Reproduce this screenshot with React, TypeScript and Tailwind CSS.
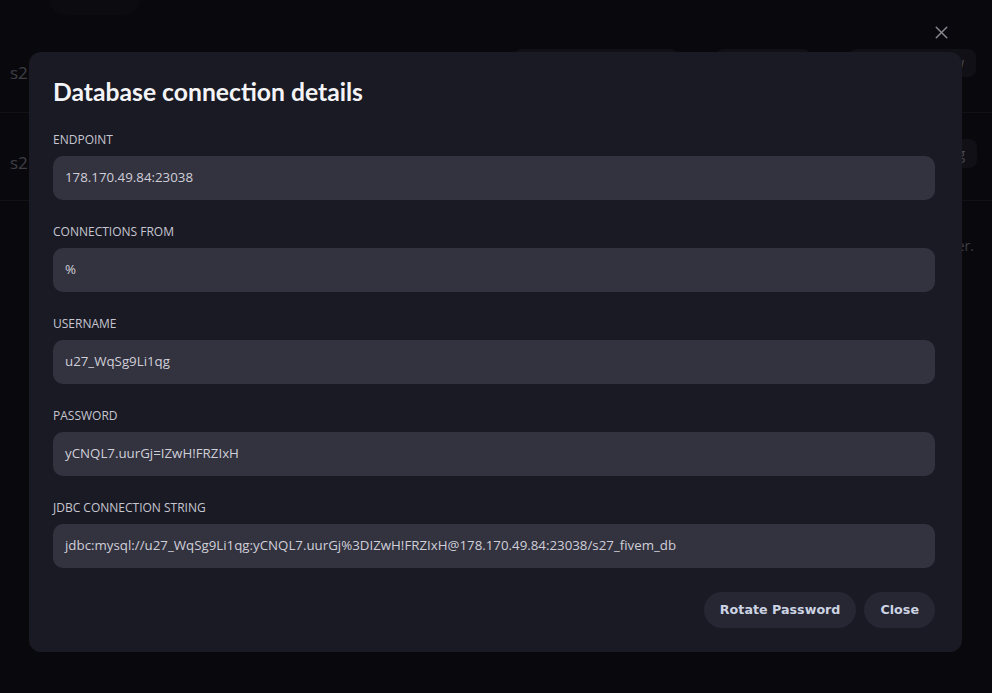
import { X } from "lucide-react";

const FIELDS = [
  { label: "Endpoint", value: "178.170.49.84:23038" },
  { label: "Connections from", value: "%" },
  { label: "Username", value: "u27_WqSg9Li1qg" },
  { label: "Password", value: "yCNQL7.uurGj=IZwH!FRZIxH" },
  {
    label: "JDBC connection string",
    value: "jdbc:mysql://u27_WqSg9Li1qg:yCNQL7.uurGj%3DIZwH!FRZIxH@178.170.49.84:23038/s27_fivem_db",
  },
];

function Field({ label, value }: { label: string; value: string }) {
  return (
    <div className="flex flex-col gap-2">
      <label className="text-[12px] leading-4 uppercase text-[#c6c6d0]">{label}</label>
      <div className="h-11 rounded-[10px] bg-[#33323f] px-3 flex items-center text-[13.3px] text-[#cfcfd8] whitespace-nowrap overflow-hidden">
        {value}
      </div>
    </div>
  );
}

export default function App() {
  return (
    <div
      className="relative w-[992px] h-[693px] overflow-hidden bg-[#09090d]"
      style={{ fontFamily: '"Open Sans", "Noto Sans", sans-serif' }}
    >
      {/* dimmed page behind the dialog */}
      <div className="flex flex-col">
        <div className="h-[15px] flex pl-[50px]">
          <div className="w-[90px] h-[15px] rounded-b-full bg-[#0b0b10]" />
        </div>
        <div className="h-[98px] border-b border-[#111117] flex items-center justify-between pl-[10px]">
          <span className="w-[19px] mt-[18px] overflow-hidden text-[17px] text-[#3e3e44]">s2</span>
          <div className="flex gap-[38px] pr-[16px] -mt-[2px]">
            <div className="w-[164px] h-[28px] rounded-lg bg-[#101016]" />
            <div className="w-[95px] h-[28px] rounded-lg bg-[#101016]" />
            <div className="w-[127px] h-[28px] rounded-lg bg-[#101016] flex items-center justify-end pr-3 text-[14px] text-[#4a4a52]">
              w
            </div>
          </div>
        </div>
        <div className="h-[88px] border-b border-[#111117] flex items-center justify-between pl-[10px]">
          <span className="w-[19px] mt-[12px] overflow-hidden text-[17px] text-[#3e3e44]">s2</span>
          <div className="w-[60px] h-[29px] rounded-lg bg-[#101016] mr-[15px] -mt-[6px] flex items-center justify-end pr-3 text-[14px] text-[#4a4a52]">
            g
          </div>
        </div>
        <div className="h-[88px] flex items-center justify-end pr-[18px] text-[14px] text-[#3e3e44]">
          er.
        </div>
      </div>

      <button className="absolute top-[22px] right-[40px] text-[#8a8a92]">
        <X size={21} strokeWidth={1.6} />
      </button>

      {/* dialog */}
      <div className="absolute left-[29px] top-[52px] w-[933px] rounded-xl bg-[#1a1a24] pt-6 pb-6 pl-6 pr-[27px] flex flex-col gap-6">
        <h2
          className="text-[24.7px] leading-8 font-bold text-[#f4f4f7]"
          style={{ fontFamily: 'Lato, "Open Sans", sans-serif' }}
        >
          Database connection details
        </h2>
        {FIELDS.map((f) => (
          <Field key={f.label} label={f.label} value={f.value} />
        ))}
        <div className="flex justify-end gap-2">
          {["Rotate Password", "Close"].map((t) => (
            <button
              key={t}
              className="h-9 px-4 rounded-full bg-[#262733] text-[12.7px] font-bold text-[#ccd3e2]"
              style={{ fontFamily: '"DejaVu Sans", sans-serif' }}
            >
              {t}
            </button>
          ))}
        </div>
      </div>
    </div>
  );
}
